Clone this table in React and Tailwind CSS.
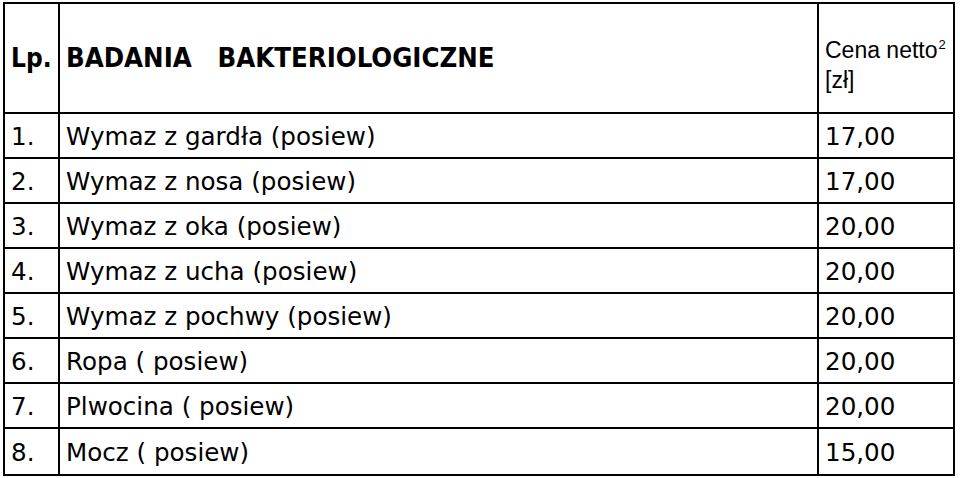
const rows = [
  { lp: '1.', name: 'Wymaz z gardła (posiew)', price: '17,00' },
  { lp: '2.', name: 'Wymaz z nosa (posiew)', price: '17,00' },
  { lp: '3.', name: 'Wymaz z oka (posiew)', price: '20,00' },
  { lp: '4.', name: 'Wymaz z ucha (posiew)', price: '20,00' },
  { lp: '5.', name: 'Wymaz z pochwy (posiew)', price: '20,00' },
  { lp: '6.', name: 'Ropa ( posiew)', price: '20,00' },
  { lp: '7.', name: 'Plwocina ( posiew)', price: '20,00' },
  { lp: '8.', name: 'Mocz ( posiew)', price: '15,00' },
];

const body = "font-['DejaVu_Sans',sans-serif] text-[24.6px] text-black pt-[3px]";
const bold = "font-['DejaVu_Sans_Condensed','DejaVu_Sans',sans-serif] font-bold font-stretch-condensed text-black";

export default function App() {
  return (
    <div className="w-[960px] h-[478px] bg-white pt-[2px] pl-[3px]">
      <div className="w-[952px] border-2 border-black grid grid-cols-[55px_759px_1fr]">
        <div className={`h-[110px] border-r-2 border-b-2 border-black flex items-center pl-[6px] text-[26px] ${bold}`}>Lp.</div>
        <div className={`h-[110px] border-r-2 border-b-2 border-black flex items-center pl-[6px] whitespace-pre text-[27.3px] ${bold}`}>
          BADANIA   BAKTERIOLOGICZNE
        </div>
        <div className="h-[110px] border-b-2 border-black flex flex-col justify-center pl-[6px] pt-[14px] font-['Liberation_Sans',sans-serif] text-[23px] leading-[27px] text-black">
          <span>
            Cena netto<span className="text-[13px] relative -top-[9px] ml-[1px]">2</span>
          </span>
          <span>[zł]</span>
        </div>
        {rows.map((r, i) => {
          const last = i === rows.length - 1;
          const b = last ? '' : 'border-b-2';
          return [
            <div key={`a${i}`} className={`h-[45px] border-r-2 ${b} border-black flex items-center pl-[6px] ${body}`}>{r.lp}</div>,
            <div key={`b${i}`} className={`h-[45px] border-r-2 ${b} border-black flex items-center pl-[6px] ${body}`}>{r.name}</div>,
            <div key={`c${i}`} className={`h-[45px] ${b} border-black flex items-center pl-[6px] ${body}`}>{r.price}</div>,
          ];
        })}
      </div>
    </div>
  );
}
